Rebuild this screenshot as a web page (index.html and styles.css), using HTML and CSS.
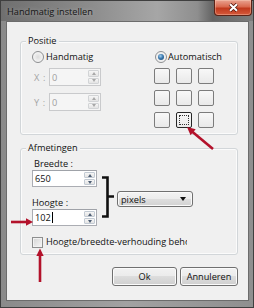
FILE: index.html
```html
<!DOCTYPE html>
<html lang="nl">
<head>
<meta charset="utf-8">
<title>Handmatig instellen</title>
<link rel="stylesheet" href="styles.css">
</head>
<body>
<div class="window">
  <div class="titlebar">
    <span class="title">Handmatig instellen</span>
    <div class="close">
      <svg width="11" height="9" viewBox="0 0 11 9"><path class="x-shadow" d="M2 1.2 L9 7.8 M9 1.2 L2 7.8"/><path class="x-fg" d="M2 1.2 L9 7.8 M9 1.2 L2 7.8"/></svg>
    </div>
  </div>
  <div class="client">
    <div class="group group-pos">
      <div class="group-title">Positie</div>
      <div class="pos-body">
        <div class="pos-left">
          <div class="radio-row"><span class="radio"></span><span>Handmatig</span></div>
          <div class="coord-row coord-x">
            <span class="coord-label">X :</span>
            <div class="field field-disabled field-coord">
              <span class="field-text">0</span>
              <div class="spin"><span class="spin-btn spin-up"></span><span class="spin-btn spin-down"></span></div>
            </div>
          </div>
          <div class="coord-row coord-y">
            <span class="coord-label">Y :</span>
            <div class="field field-disabled field-coord">
              <span class="field-text">0</span>
              <div class="spin"><span class="spin-btn spin-up"></span><span class="spin-btn spin-down"></span></div>
            </div>
          </div>
        </div>
        <div class="pos-right">
          <div class="radio-row radio-row-auto"><span class="radio radio-checked"></span><span>Automatisch</span></div>
          <div class="anchor-grid">
            <span class="cell"></span><span class="cell"></span><span class="cell"></span>
            <span class="cell"></span><span class="cell"></span><span class="cell"></span>
            <span class="cell"></span><span class="cell cell-selected"></span><span class="cell"></span>
          </div>
        </div>
      </div>
    </div>

    <div class="group group-size">
      <div class="group-title">Afmetingen</div>
      <div class="size-body">
        <div class="size-left">
          <span class="size-label size-label-w">Breedte :</span>
          <div class="field field-size">
            <span class="field-text">650</span>
            <div class="spin"><span class="spin-btn spin-up"></span><span class="spin-btn spin-down"></span></div>
          </div>
          <span class="size-label size-label-h">Hoogte :</span>
          <div class="field field-size">
            <span class="field-text">102<span class="caret"></span></span>
            <div class="spin"><span class="spin-btn spin-up"></span><span class="spin-btn spin-down"></span></div>
          </div>
        </div>
        <svg class="brace" width="13" height="42" viewBox="0 0 13 42"><path d="M1 1.5 H6.5 V40.5 H1 M6.5 20.5 H13"/></svg>
        <div class="select"><span>pixels</span><span class="select-arrow"></span></div>
      </div>
      <div class="check-row">
        <span class="checkbox"></span>
        <span class="check-text">Hoogte/breedte-verhouding behouden</span>
      </div>
    </div>

    <div class="buttons">
      <div class="btn btn-ok">Ok</div>
      <div class="btn btn-cancel">Annuleren</div>
    </div>
  </div>

  <svg class="marks" width="254" height="308" viewBox="0 0 254 308">
    <line x1="213" y1="149" x2="192" y2="131.5"/>
    <polygon points="187,127 195.7,129.2 190.5,135.3"/>
    <line x1="11" y1="222" x2="27" y2="222"/>
    <polygon points="33,222 26,218.3 26,225.7"/>
    <line x1="40" y1="282" x2="40" y2="255"/>
    <polygon points="40,248.5 36.3,256 43.7,256"/>
  </svg>
</div>
</body>
</html>
```
FILE: styles.css
```css
html, body {
  margin: 0;
  padding: 0;
  background: #ffffff;
}

body {
  font-family: "Open Sans", "Liberation Sans", sans-serif;
  font-size: 9.2px;
  color: #111;
}

.window {
  position: relative;
  box-sizing: border-box;
  width: 254px;
  height: 308px;
  border: 1px solid #3f3f3f;
  background: linear-gradient(90deg, #8a8a8a, #a2a2a2 50%, #8f8f8f);
  padding: 0 4px 6px 5px;
  display: flex;
  flex-direction: column;
}

.titlebar {
  height: 20px;
  margin: 0 -4px 0 -5px;
  padding-left: 6px;
  display: flex;
  align-items: flex-start;
  background: linear-gradient(90deg, #6f6f6f 0%, #8c8c8c 35%, #a6a6a6 62%, #8e8e8e 78%, #646464 84%, #7d7d7d 100%);
}

.title {
  line-height: 21px;
  color: #151515;
  text-shadow: 0 0 4px rgba(255, 255, 255, 0.35);
}

.close {
  box-sizing: border-box;
  width: 38px;
  height: 16px;
  margin: -1px 1px 0 auto;
  border: 1px solid #5c2216;
  border-top: none;
  border-radius: 0 0 4px 4px;
  background: linear-gradient(#e9a391 0%, #d9694f 45%, #c0391d 55%, #d65a3c 100%);
  box-shadow: inset 0 0 0 1px rgba(255, 220, 200, 0.35);
  display: flex;
  align-items: center;
  justify-content: center;
}

.x-shadow {
  stroke: #5a1a10;
  stroke-width: 3.6;
  fill: none;
}

.x-fg {
  stroke: #ffffff;
  stroke-width: 2;
  fill: none;
}

.client {
  flex: 1;
  border: 1px solid #6c6c6c;
  background: #f0f0f0;
  padding: 0 10px 0 13px;
  display: flex;
  flex-direction: column;
}

.group {
  border: 1px solid #d2d6d9;
  border-radius: 3px;
  box-shadow: inset 0 0 0 1px #fbfbfb;
  display: flex;
  flex-direction: column;
  padding: 0 10px 6px 11px;
}

.group-pos {
  margin-top: 19px;
}

.group-size {
  margin-top: 13px;
}

.group-title {
  align-self: flex-start;
  margin: -7px 0 0 -6px;
  padding: 0 2px;
  background: #f0f0f0;
  line-height: 12px;
}

.pos-body {
  display: flex;
  margin-top: 4px;
}

.pos-left {
  width: 122px;
  display: flex;
  flex-direction: column;
}

.pos-right {
  display: flex;
  flex-direction: column;
}

.radio-row {
  display: flex;
  align-items: center;
  height: 12px;
  line-height: 12px;
  gap: 2px;
}

.radio-row-auto {
  margin-left: 1px;
  gap: 1px;
}

.radio {
  box-sizing: border-box;
  width: 12px;
  height: 12px;
  border: 1px solid #8d8f91;
  border-radius: 50%;
  background: radial-gradient(circle at 50% 50%, #dcdcdc 0%, #eeeeee 50%, #fafafa 100%);
  display: flex;
  align-items: center;
  justify-content: center;
}

.radio-checked::after {
  content: "";
  width: 6px;
  height: 6px;
  border-radius: 50%;
  background: radial-gradient(circle at 40% 35%, #a6d0f0 0%, #3c7bb0 45%, #16426d 100%);
}

.coord-row {
  display: flex;
  align-items: center;
}

.coord-x {
  margin-top: 5px;
}

.coord-y {
  margin-top: 7px;
}

.coord-label {
  width: 15px;
  padding-left: 2px;
  color: #a4a4a4;
  letter-spacing: 0.6px;
}

.field {
  box-sizing: border-box;
  display: flex;
  border: 1px solid #abadb3;
  border-top-color: #9fa2a8;
  background: #ffffff;
}

.field-coord {
  width: 52px;
  height: 18px;
}

.field-size {
  width: 65px;
  height: 17px;
}

.field-disabled {
  border-color: #c9cacc;
  background: #f5f5f5;
  color: #a0a0a0;
}

.field-text {
  flex: 1;
  padding-left: 2px;
  display: flex;
  align-items: center;
}

.caret {
  width: 1px;
  height: 11px;
  margin-left: 1px;
  background: #000;
}

.spin {
  width: 11px;
  padding: 1px 1px 1px 0;
  display: flex;
  flex-direction: column;
  gap: 1px;
}

.spin-btn {
  flex: 1;
  border: 1px solid #c2cad3;
  border-radius: 1px;
  background: linear-gradient(#f6f6f6, #e4e4e4);
  display: flex;
  align-items: center;
  justify-content: center;
}

.spin-up::after {
  content: "";
  border-left: 2.5px solid transparent;
  border-right: 2.5px solid transparent;
  border-bottom: 3px solid #4f5f75;
}

.spin-down::after {
  content: "";
  border-left: 2.5px solid transparent;
  border-right: 2.5px solid transparent;
  border-top: 3px solid #4f5f75;
}

.field-disabled .spin-btn {
  border-color: #d2d4d6;
}

.field-disabled .spin-up::after {
  border-bottom-color: #a8a8a8;
}

.field-disabled .spin-down::after {
  border-top-color: #a8a8a8;
}

.anchor-grid {
  display: grid;
  grid-template-columns: repeat(3, 16px);
  grid-auto-rows: 16px;
  gap: 6px;
  margin-top: 5px;
}

.cell {
  position: relative;
  box-sizing: border-box;
  border: 1px solid #7c7c7c;
  border-radius: 2px;
  background: linear-gradient(#f8f8f8, #e9e9e9);
}

.cell-selected {
  border-color: #262626;
}

.cell-selected::after {
  content: "";
  position: absolute;
  inset: 2px;
  border: 1px dotted #333;
}

.size-body {
  display: flex;
  align-items: flex-start;
  margin-top: 4px;
}

.size-left {
  width: 65px;
  display: flex;
  flex-direction: column;
}

.size-label {
  line-height: 12px;
}

.size-label-w {
  padding-left: 2px;
}

.size-label-h {
  margin-top: 10px;
}

.brace {
  align-self: flex-end;
  margin: 0 0 8px 4px;
}

.brace path {
  fill: none;
  stroke: #111;
  stroke-width: 2.6;
}

.select {
  box-sizing: border-box;
  align-self: flex-end;
  width: 76px;
  height: 16px;
  margin: 0 0 19px 3px;
  padding: 0 6px 0 3px;
  border: 1px solid #707070;
  border-radius: 3px;
  background: linear-gradient(#f3f3f3 0%, #ececec 50%, #dedede 50%, #d2d2d2 100%);
  box-shadow: inset 0 0 0 1px #fafafa;
  display: flex;
  align-items: center;
  justify-content: space-between;
}

.select-arrow {
  border-left: 3.5px solid transparent;
  border-right: 3.5px solid transparent;
  border-top: 4px solid #111;
}

.check-row {
  display: flex;
  align-items: center;
  height: 12px;
  margin-top: 10px;
}

.checkbox {
  box-sizing: border-box;
  width: 11px;
  height: 11px;
  border: 1px solid #8e8f8f;
  background: linear-gradient(135deg, #d4d4d4, #f7f7f7);
  box-shadow: inset 0 0 0 1px #f2f2f2;
}

.check-text {
  width: 141px;
  margin-left: 3px;
  white-space: nowrap;
  overflow: hidden;
  line-height: 12px;
}

.buttons {
  display: flex;
  justify-content: flex-end;
  gap: 3px;
  margin-top: 12px;
}

.btn {
  box-sizing: border-box;
  height: 19px;
  border: 1px solid #707070;
  border-radius: 3px;
  background: linear-gradient(#f2f2f2 0%, #ebebeb 50%, #dddddd 50%, #cfcfcf 100%);
  box-shadow: inset 0 0 0 1px #fbfbfb;
  display: flex;
  align-items: center;
  justify-content: center;
}

.btn-ok {
  width: 65px;
}

.btn-cancel {
  width: 58px;
}

.marks {
  position: absolute;
  left: -1px;
  top: -1px;
  pointer-events: none;
}

.marks line {
  stroke: #b3122b;
  stroke-width: 2.6;
}

.marks polygon {
  fill: #b3122b;
}
```
